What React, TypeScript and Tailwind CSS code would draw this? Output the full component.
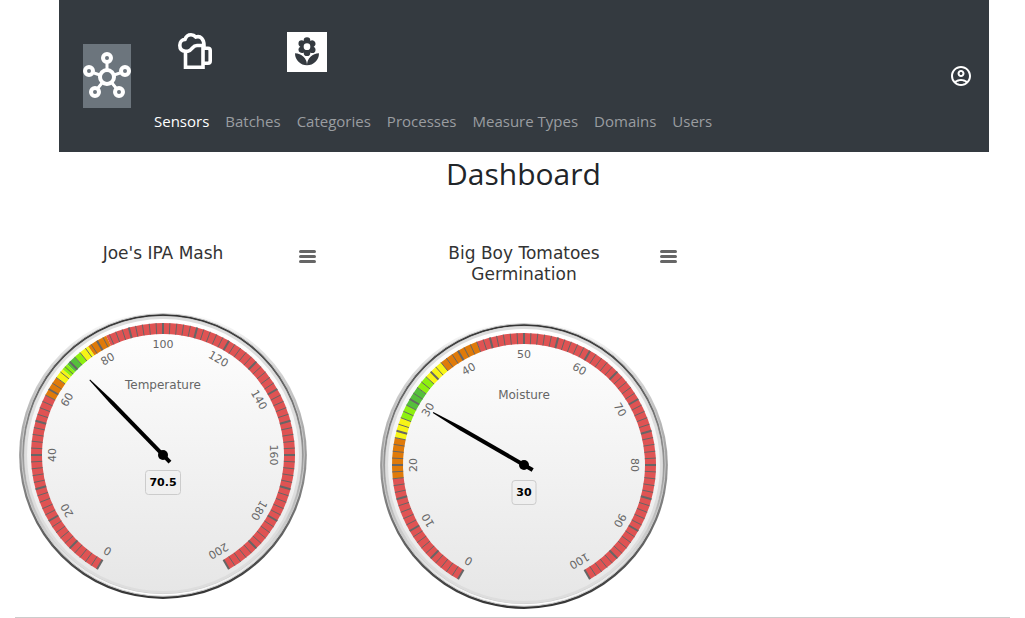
import React from "react";
import { MdLocalFlorist, MdOutlineAccountCircle } from "react-icons/md";

type Band = { from: number; to: number; color: string };

type GaugeProps = {
  id: string;
  title: string;
  label: string;
  value: number;
  max: number;
  bands: Band[];
};

const RED = "#DF5353";
const ORANGE = "#DF7A0A";
const YELLOW = "#F7F416";
const LIME = "#8EF00F";
const GREEN = "#55BF3B";

const CX = 163;
const CY = 146;
const R = 132;
const BAND_INNER = 121;

function point(angle: number, radius: number) {
  const a = (angle * Math.PI) / 180;
  return { x: CX + radius * Math.sin(a), y: CY - radius * Math.cos(a) };
}

function arc(a0: number, a1: number, outer: number, inner: number) {
  const large = a1 - a0 > 180 ? 1 : 0;
  const p = [point(a0, outer), point(a1, outer), point(a1, inner), point(a0, inner)];
  return `M${p[0].x} ${p[0].y}A${outer} ${outer} 0 ${large} 1 ${p[1].x} ${p[1].y}L${p[2].x} ${p[2].y}A${inner} ${inner} 0 ${large} 0 ${p[3].x} ${p[3].y}Z`;
}

function Gauge({ id, title, label, value, max, bands }: GaugeProps) {
  const toAngle = (v: number) => -150 + (300 * v) / max;
  const ticks = Array.from({ length: 101 }, (_, i) => i);
  const labels = Array.from({ length: 11 }, (_, i) => i);
  const text = String(value);
  const boxWidth = text.length > 2 ? 35 : 24;
  return (
    <section className="flex h-[374px] w-[361px] flex-col">
      <header className="flex items-start">
        <h3 className="ml-[84px] w-[158px] text-center font-['Lucida_Sans_Unicode','DejaVu_Sans','Noto_Sans',sans-serif] text-[17px] leading-[21px] text-[#333333]">
          {title}
        </h3>
        <button type="button" aria-label={`${title} menu`} className="mt-[7px] ml-[57px] flex w-[17px] flex-col gap-[2px]">
          <span className="h-[3px] w-full rounded-full bg-[#666666]" />
          <span className="h-[3px] w-full rounded-full bg-[#666666]" />
          <span className="h-[3px] w-full rounded-full bg-[#666666]" />
        </button>
      </header>
      <div className="flex flex-1 items-center pt-7">
        <svg viewBox="0 0 326 292" className="h-[292px] w-[326px] font-['DejaVu_Sans',sans-serif]" role="img" aria-label={`${label} ${text}`}>
          <defs>
            <linearGradient id={`${id}-rim`} x1="0" y1="0" x2="0" y2="1">
              <stop offset="0" stopColor="#fff" />
              <stop offset="1" stopColor="#333" />
            </linearGradient>
            <linearGradient id={`${id}-edge`} x1="0" y1="0" x2="0" y2="1">
              <stop offset="0" stopColor="#333" />
              <stop offset="1" stopColor="#fff" />
            </linearGradient>
            <linearGradient id={`${id}-face`} x1="0" y1="0" x2="0" y2="1">
              <stop offset="0" stopColor="#fff" />
              <stop offset="1" stopColor="#e6e6e6" />
            </linearGradient>
          </defs>
          <circle cx={CX} cy={CY} r={R * 1.09} fill={`url(#${id}-rim)`} />
          <circle cx={CX} cy={CY} r={R * 1.07} fill={`url(#${id}-edge)`} stroke="#ccc" />
          <circle cx={CX} cy={CY} r={R * 1.05} fill={`url(#${id}-face)`} stroke="#ccc" />
          <circle cx={CX} cy={CY} r={R * 1.04} fill="none" stroke="#ddd" strokeWidth={R * 0.02} />
          {bands.map((b) => (
            <path key={b.from} d={arc(toAngle(b.from), toAngle(b.to), R, BAND_INNER)} fill={b.color} />
          ))}
          {ticks.map((i) => {
            const a = -150 + i * 3;
            const p = point(a, R);
            const q = point(a, BAND_INNER);
            return <line key={i} x1={p.x} y1={p.y} x2={q.x} y2={q.y} stroke="#666" strokeWidth={i % 5 === 0 ? 2 : 1} />;
          })}
          {labels.map((i) => {
            const a = -150 + i * 30;
            const p = point(a, 107);
            return (
              <text key={i} x={p.x} y={p.y} transform={`rotate(${a} ${p.x} ${p.y})`} textAnchor="middle" fontSize="11" fill="#666">
                {(max / 10) * i}
              </text>
            );
          })}
          <text x={CX} y={CY - 66} textAnchor="middle" fontSize="12" fill="#666">{label}</text>
          <g transform={`rotate(${toAngle(value)} ${CX} ${CY})`}>
            <path d={`M${CX - 2} ${CY + 10}V${CY - 73}L${CX - 0.5} ${CY - 105}H${CX + 0.5}L${CX + 2} ${CY - 73}V${CY + 10}Z`} />
          </g>
          <circle cx={CX} cy={CY} r="5" />
          <rect x={CX - boxWidth / 2} y={CY + 15.5} width={boxWidth} height="24" rx="3" fill="none" stroke="#ccc" />
          <text x={CX} y={CY + 31} textAnchor="middle" fontSize="11" fontWeight="bold" fill="#000">{text}</text>
        </svg>
      </div>
    </section>
  );
}

const links = ["Sensors", "Batches", "Categories", "Processes", "Measure Types", "Domains", "Users"];

function HubIcon() {
  return (
    <svg viewBox="0 0 48 48" className="size-12" fill="none" stroke="#fff" aria-hidden="true">
      <path strokeWidth="3" d="M24 11V17M11 21L17 23M37 21L31 23M15 36L19 31M33 36L29 31" />
      <circle cx="24" cy="25" r="7" strokeWidth="4" />
      <g strokeWidth="4">
        <circle cx="24" cy="6" r="4" />
        <circle cx="6" cy="19" r="4" />
        <circle cx="42" cy="19" r="4" />
        <circle cx="12" cy="40" r="4" />
        <circle cx="36" cy="40" r="4" />
      </g>
    </svg>
  );
}

function BeerIcon() {
  return (
    <svg viewBox="0 0 34 36" className="h-9 w-[34px]" fill="none" stroke="#fff" strokeWidth="3.6" aria-hidden="true">
      <path d="M7.5 17.5V34.2H25V13.5" />
      <path d="M25 15.2H30Q32.2 15.2 32.2 17.4V28Q32.2 30.2 30 30.2H25" />
      <path d="M7.5 18.2C3.8 18 1.8 15.6 1.8 12.2C1.8 9 4 6.6 7 6.4C8 3.6 10 1.8 13 1.8C15 1.8 16.6 2.6 17.8 4C22.5 2.4 26 6 26 12.5H19C14 12.5 14.8 17.2 9.8 18.2Z" />
    </svg>
  );
}

const temperatureBands: Band[] = [
  { from: 0, to: 58, color: RED },
  { from: 58, to: 64, color: ORANGE },
  { from: 64, to: 67, color: YELLOW },
  { from: 67, to: 69, color: LIME },
  { from: 69, to: 72, color: GREEN },
  { from: 72, to: 74, color: LIME },
  { from: 74, to: 77, color: YELLOW },
  { from: 77, to: 83, color: ORANGE },
  { from: 83, to: 200, color: RED },
];

const moistureBands: Band[] = [
  { from: 0, to: 18, color: RED },
  { from: 18, to: 24, color: ORANGE },
  { from: 24, to: 27, color: YELLOW },
  { from: 27, to: 29, color: LIME },
  { from: 29, to: 32, color: GREEN },
  { from: 32, to: 34, color: LIME },
  { from: 34, to: 37, color: YELLOW },
  { from: 37, to: 43, color: ORANGE },
  { from: 43, to: 100, color: RED },
];

export default function App() {
  return (
    <div className="bg-white font-['Segoe_UI','Open_Sans','Noto_Sans',sans-serif] text-[#212529]">
      <nav className="mr-9 ml-[59px] flex h-[152px] items-center bg-[#343a40] pr-4 pl-6">
        <a href="#home" aria-label="Home" className="flex h-16 w-12 items-center justify-center bg-[#6c757d] text-white">
          <HubIcon />
        </a>
        <div className="ml-[15px] flex h-full flex-1 flex-col justify-between pt-8 pb-[19px]">
          <div className="flex items-start pl-8">
            <a href="#beer" aria-label="Brewing" className="mt-[1px] mr-[75px]">
              <BeerIcon />
            </a>
            <a href="#garden" aria-label="Garden" className="flex size-10 items-center justify-center bg-white text-[#343a40]">
              <MdLocalFlorist className="size-8" />
            </a>
          </div>
          <ul className="flex text-[15px] leading-6">
            {links.map((link, i) => (
              <li key={link}>
                <a href={`#${link}`} className={i === 0 ? "block px-2 text-white" : "block px-2 text-[#9a9da0]"}>
                  {link}
                </a>
              </li>
            ))}
          </ul>
        </div>
        <button type="button" aria-label="Account" className="text-white">
          <MdOutlineAccountCircle className="size-6" />
        </button>
      </nav>
      <main>
        <h1 className="pl-[22px] text-center text-[30px] leading-[44px]">Dashboard</h1>
        <div className="mt-[47px] flex">
          <Gauge id="temperature" title="Joe's IPA Mash" label="Temperature" value={70.5} max={200} bands={temperatureBands} />
          <Gauge id="moisture" title="Big Boy Tomatoes Germination" label="Moisture" value={30} max={100} bands={moistureBands} />
        </div>
      </main>
      <hr className="mx-[15px] border-[#cccccc]" />
    </div>
  );
}
